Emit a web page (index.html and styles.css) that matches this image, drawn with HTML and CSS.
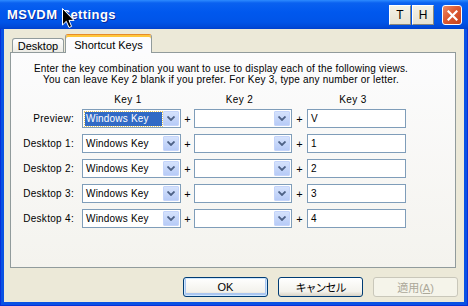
FILE: index.html
```html
<!DOCTYPE html>
<html lang="ja">
  <head>
    <meta charset="UTF-8" />
    <title>MSVDM Settings</title>
    <link rel="stylesheet" href="styles.css">
  </head>
  <body>
    <div class="window">
      <div class="titlebar">
        <span class="title">MSVDM Settings</span>
        <div class="caption-buttons">
          <button class="cap-btn">T</button>
          <button class="cap-btn">H</button>
          <button class="cap-close">
            <svg width="11" height="11" viewBox="0 0 11 11">
              <path d="M1.5 1.5 L9.5 9.5 M9.5 1.5 L1.5 9.5" stroke="#fff" stroke-width="2.2" stroke-linecap="square" />
            </svg>
          </button>
        </div>
      </div>

      <div class="client">
        <div class="tabs">
          <div class="tab">Desktop</div>
          <div class="tab active">Shortcut Keys</div>
        </div>

        <div class="panel">
          <p class="intro">
            Enter the key combination you want to use to display each of the following views.<br>
            You can leave Key 2 blank if you prefer. For Key 3, type any number or letter.
          </p>

          <div class="key-grid key-head">
            <span></span>
            <span class="col-head">Key 1</span>
            <span></span>
            <span class="col-head">Key 2</span>
            <span></span>
            <span class="col-head">Key 3</span>
          </div>

          <div class="key-grid key-rows">
            <span class="key-label">Preview:</span>
            <div class="combo">
              <span class="combo-value selected">Windows Key</span>
              <span class="combo-btn"><svg width="8" height="5" viewBox="0 0 8 5"><path d="M0.5 0.5 L4 4 L7.5 0.5" fill="none" stroke="#4d6185" stroke-width="1.8" /></svg></span>
            </div>
            <span class="plus">+</span>
            <div class="combo">
              <span class="combo-value"></span>
              <span class="combo-btn"><svg width="8" height="5" viewBox="0 0 8 5"><path d="M0.5 0.5 L4 4 L7.5 0.5" fill="none" stroke="#4d6185" stroke-width="1.8" /></svg></span>
            </div>
            <span class="plus">+</span>
            <div class="field">V</div>

            <span class="key-label">Desktop 1:</span>
            <div class="combo">
              <span class="combo-value">Windows Key</span>
              <span class="combo-btn"><svg width="8" height="5" viewBox="0 0 8 5"><path d="M0.5 0.5 L4 4 L7.5 0.5" fill="none" stroke="#4d6185" stroke-width="1.8" /></svg></span>
            </div>
            <span class="plus">+</span>
            <div class="combo">
              <span class="combo-value"></span>
              <span class="combo-btn"><svg width="8" height="5" viewBox="0 0 8 5"><path d="M0.5 0.5 L4 4 L7.5 0.5" fill="none" stroke="#4d6185" stroke-width="1.8" /></svg></span>
            </div>
            <span class="plus">+</span>
            <div class="field">1</div>

            <span class="key-label">Desktop 2:</span>
            <div class="combo">
              <span class="combo-value">Windows Key</span>
              <span class="combo-btn"><svg width="8" height="5" viewBox="0 0 8 5"><path d="M0.5 0.5 L4 4 L7.5 0.5" fill="none" stroke="#4d6185" stroke-width="1.8" /></svg></span>
            </div>
            <span class="plus">+</span>
            <div class="combo">
              <span class="combo-value"></span>
              <span class="combo-btn"><svg width="8" height="5" viewBox="0 0 8 5"><path d="M0.5 0.5 L4 4 L7.5 0.5" fill="none" stroke="#4d6185" stroke-width="1.8" /></svg></span>
            </div>
            <span class="plus">+</span>
            <div class="field">2</div>

            <span class="key-label">Desktop 3:</span>
            <div class="combo">
              <span class="combo-value">Windows Key</span>
              <span class="combo-btn"><svg width="8" height="5" viewBox="0 0 8 5"><path d="M0.5 0.5 L4 4 L7.5 0.5" fill="none" stroke="#4d6185" stroke-width="1.8" /></svg></span>
            </div>
            <span class="plus">+</span>
            <div class="combo">
              <span class="combo-value"></span>
              <span class="combo-btn"><svg width="8" height="5" viewBox="0 0 8 5"><path d="M0.5 0.5 L4 4 L7.5 0.5" fill="none" stroke="#4d6185" stroke-width="1.8" /></svg></span>
            </div>
            <span class="plus">+</span>
            <div class="field">3</div>

            <span class="key-label">Desktop 4:</span>
            <div class="combo">
              <span class="combo-value">Windows Key</span>
              <span class="combo-btn"><svg width="8" height="5" viewBox="0 0 8 5"><path d="M0.5 0.5 L4 4 L7.5 0.5" fill="none" stroke="#4d6185" stroke-width="1.8" /></svg></span>
            </div>
            <span class="plus">+</span>
            <div class="combo">
              <span class="combo-value"></span>
              <span class="combo-btn"><svg width="8" height="5" viewBox="0 0 8 5"><path d="M0.5 0.5 L4 4 L7.5 0.5" fill="none" stroke="#4d6185" stroke-width="1.8" /></svg></span>
            </div>
            <span class="plus">+</span>
            <div class="field">4</div>
          </div>
        </div>

        <div class="actions">
          <button class="btn default">OK</button>
          <button class="btn jp">キャンセル</button>
          <button class="btn jp" disabled>適用(<u>A</u>)</button>
        </div>
      </div>

      <!-- mouse pointer sitting over the title -->
      <svg class="cursor" width="13" height="21" viewBox="0 0 13 21">
        <path d="M0.5 0.5 L0.5 17 L4.3 13.3 L7 19.5 L9.6 18.4 L7 12.4 L12 12.4 Z" fill="#000" stroke="#fff" stroke-width="1" />
      </svg>
    </div>
  </body>
</html>
```

FILE: styles.css
```css
* {
  margin: 0;
  padding: 0;
  box-sizing: border-box;
}

body {
  width: 468px;
  height: 306px;
  overflow: hidden;
  font-family: 'Liberation Sans', Arial, sans-serif;
  font-size: 10px;
  color: #000;
}

.window {
  position: relative;
  width: 468px;
  height: 306px;
  display: flex;
  flex-direction: column;
  background-color: #0a52e4;
  box-shadow: inset 0 0 0 1px #0831d9;
}

/* title bar */

.titlebar {
  height: 29px;
  display: flex;
  align-items: center;
  padding: 0 6px 0 7px;
  background: linear-gradient(
    to bottom,
    #2d8bff 0,
    #0a61f0 3px,
    #0058ee 12px,
    #0054e8 22px,
    #0049d8 27px,
    #003fcc 29px
  );
}

.title {
  flex: 1;
  color: #fff;
  font-family: 'Liberation Sans', Arial, sans-serif;
  font-weight: bold;
  font-size: 13px;
  letter-spacing: 0.4px;
  text-shadow: 1px 1px 0 #0b2a9c;
}

.caption-buttons {
  display: flex;
  align-items: center;
  gap: 1px;
  margin-top: 1px;
}

.cap-btn {
  width: 22px;
  height: 20px;
  background: linear-gradient(#f3f1e6, #e6e2d2);
  border: 1px solid;
  border-color: #fff #8a877b #8a877b #fff;
  font-family: 'Liberation Sans', Arial, sans-serif;
  font-size: 12px;
  color: #000;
}

.cap-close {
  width: 20px;
  height: 20px;
  margin-left: 7px;
  border: 1px solid #fff;
  border-radius: 3px;
  background: linear-gradient(135deg, #ef8a66, #dc5a33 45%, #c8431c);
  display: flex;
  align-items: center;
  justify-content: center;
}

/* dialog body */

.client {
  flex: 1;
  margin: 0 4px 4px;
  padding: 0 6px 0 6px;
  background-color: #ece9d8;
  display: flex;
  flex-direction: column;
}

.tabs {
  height: 23px;
  display: flex;
  align-items: flex-end;
  padding-left: 2px;
  position: relative;
  z-index: 1;
}

.tab {
  width: 52px;
  height: 14px;
  border: 1px solid #919b9c;
  border-bottom: none;
  border-radius: 3px 3px 0 0;
  background: linear-gradient(#fefefe, #ecebe5);
  font-size: 11px;
  display: flex;
  align-items: center;
  justify-content: center;
  padding-top: 1px;
}

.tab.active {
  width: 87px;
  height: 19px;
  margin-left: 1px;
  margin-bottom: -1px;
  border-top: 1px solid #e68b2c;
  background: #fcfcfe;
  box-shadow: inset 0 2px 0 #ffc73c;
  padding-top: 2px;
}

.panel {
  width: 446px;
  height: 216px;
  border: 1px solid #919b9c;
  background: linear-gradient(#fcfcfd, #f4f3ee);
  padding-top: 10px;
}

.intro {
  width: 404px;
  margin-left: 8px;
  text-align: center;
  line-height: 11px;
  letter-spacing: 0.2px;
}

.key-grid {
  display: grid;
  grid-template-columns: 71px 99px 13px 98px 15px 99px;
}

.key-head {
  margin-top: 9px;
  line-height: 11px;
}

.col-head {
  text-align: center;
  padding-right: 7px;
  letter-spacing: 0.4px;
}

.key-rows {
  margin-top: 4px;
  grid-auto-rows: 19px;
  row-gap: 6px;
}

.key-label {
  align-self: center;
  text-align: right;
  padding-right: 8px;
  letter-spacing: 0.3px;
}

.plus {
  align-self: center;
  text-align: center;
  font-size: 11px;
}

.combo {
  height: 19px;
  border: 1px solid #7f9db9;
  background-color: #fff;
  padding: 1px;
  display: flex;
  align-items: center;
}

.combo-value {
  flex: 1;
  height: 14px;
  margin: 0 1px 0 1px;
  padding-left: 1px;
  display: flex;
  align-items: center;
  white-space: nowrap;
  letter-spacing: 0.2px;
}

.combo-value.selected {
  background-color: #316ac5;
  color: #fff;
  outline: 1px dotted #e8c860;
}

.combo-btn {
  width: 16px;
  height: 15px;
  border: 1px solid #c4d4fa;
  border-radius: 1px;
  background: linear-gradient(#d5e2fc, #b7cbf7);
  display: flex;
  align-items: center;
  justify-content: center;
}

.field {
  height: 19px;
  border: 1px solid #7f9db9;
  background-color: #fff;
  padding-left: 3px;
  display: flex;
  align-items: center;
}

/* bottom buttons */

.actions {
  display: flex;
  justify-content: flex-end;
  gap: 10px;
  margin-top: 9px;
}

.btn {
  width: 85px;
  height: 20px;
  border: 1px solid #003c74;
  border-radius: 3px;
  background: linear-gradient(#ffffff, #f3f2ec 75%, #d8d3c6);
  font-family: 'Liberation Sans', Arial, sans-serif;
  font-size: 11px;
  color: #000;
}

.btn.default {
  box-shadow: inset 0 0 0 1px #cee7ff, inset 0 -1px 0 2px #aac6f0;
}

.btn.jp {
  font-family: 'Liberation Sans', 'Noto Sans CJK JP', sans-serif;
  font-size: 11px;
  letter-spacing: -1px;
}

.btn:disabled {
  border-color: #c9c7ba;
  background: #f5f4ea;
  color: #aca899;
  letter-spacing: 0;
}

.cursor {
  position: absolute;
  left: 62px;
  top: 8px;
}
```
